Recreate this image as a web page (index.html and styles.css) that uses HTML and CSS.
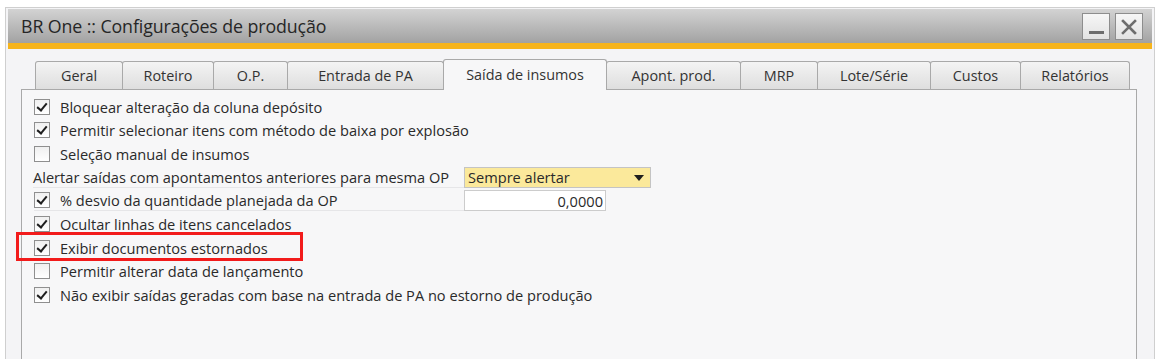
FILE: index.html
```html
<!DOCTYPE html>
<html lang="pt-BR">
<head>
    <meta charset="UTF-8">
    <title>BR One :: Configurações de produção</title>
    <link rel="stylesheet" href="styles.css">
</head>
<body>
    <!-- Janela -->
    <div class="window">
        <div class="title-bar">
            <span class="title">BR One :: Configurações de produção</span>
            <div class="win-buttons">
                <div class="win-btn btn-min"><span></span></div>
                <div class="win-btn btn-close">
                    <svg width="16" height="16" viewBox="0 0 16 16">
                        <path d="M2 2 L14 14 M14 2 L2 14" stroke="#6d6d6d" stroke-width="2.6" stroke-linecap="square"/>
                    </svg>
                </div>
            </div>
        </div>
        <div class="accent"></div>

        <div class="window-body">
            <!-- Abas -->
            <div class="tabs">
                <div class="tab t-geral">Geral</div>
                <div class="tab t-roteiro">Roteiro</div>
                <div class="tab t-op">O.P.</div>
                <div class="tab t-entrada">Entrada de PA</div>
                <div class="tab t-saida active">Saída de insumos</div>
                <div class="tab t-apont">Apont. prod.</div>
                <div class="tab t-mrp">MRP</div>
                <div class="tab t-lote">Lote/Série</div>
                <div class="tab t-custos">Custos</div>
                <div class="tab t-relat">Relatórios</div>
            </div>

            <!-- Conteúdo da aba -->
            <div class="panel">
                <div class="row"><span class="check on"></span>Bloquear alteração da coluna depósito</div>
                <div class="row"><span class="check on"></span>Permitir selecionar itens com método de baixa por explosão</div>
                <div class="row"><span class="check"></span>Seleção manual de insumos</div>
                <div class="row field-row">
                    <span class="field-label plain">Alertar saídas com apontamentos anteriores para mesma OP</span>
                    <div class="select">Sempre alertar<span class="arrow"></span></div>
                </div>
                <div class="row field-row">
                    <span class="field-label"><span class="check on"></span>% desvio da quantidade planejada da OP</span>
                    <div class="input">0,0000</div>
                </div>
                <div class="row"><span class="check on"></span>Ocultar linhas de itens cancelados</div>
                <div class="row highlighted"><span class="check on"></span>Exibir documentos estornados</div>
                <div class="row"><span class="check"></span>Permitir alterar data de lançamento</div>
                <div class="row"><span class="check on"></span>Não exibir saídas geradas com base na entrada de PA no estorno de produção</div>
            </div>
        </div>
    </div>
</body>
</html>
```

FILE: styles.css
```css
*, *::before, *::after {
    margin: 0;
    padding: 0;
    box-sizing: border-box;
}

html, body {
    background: #ffffff;
    font-family: 'Open Sans', 'Noto Sans', sans-serif;
    color: #2b2b2b;
    width: 1160px;
    height: 359px;
    overflow: hidden;
}

body {
    padding: 7px 0 0 5px;
}

/* Janela */
.window {
    width: 1150px;
    height: 352px;
    border: 1px solid #cfcfcf;
    border-bottom: none;
    padding: 1px 2px 0 2px;
    background: #f4f4f6;
    overflow: hidden;
}

.title-bar {
    height: 34px;
    background: linear-gradient(#d3d3d3, #a2a2a2);
    display: flex;
    align-items: center;
    justify-content: space-between;
    padding: 0 9px 0 13px;
}

.title {
    font-size: 17.8px;
    color: #262626;
    letter-spacing: -0.1px;
}

.win-buttons {
    display: flex;
    gap: 5px;
    margin-top: 1px;
}

.win-btn {
    width: 28px;
    height: 27px;
    background: linear-gradient(#f6f6f6, #e2e2e2);
    border: 1px solid #8d8d8d;
    display: flex;
    align-items: center;
    justify-content: center;
}

.btn-min span {
    display: block;
    width: 15px;
    height: 3px;
    background: #6d6d6d;
    margin-top: 12px;
}

.accent {
    height: 6px;
    background: #f6b41c;
}

.window-body {
    padding: 10px 15px 0 13px;
}

/* Abas */
.tabs {
    display: flex;
    align-items: flex-end;
    height: 30px;
    padding-left: 14px;
}

.tab {
    height: 28px;
    border: 1px solid #a9a9a9;
    border-bottom: none;
    border-radius: 3px 3px 0 0;
    background: linear-gradient(#f4f4f4, #dedede);
    font-size: 14.4px;
    color: #333;
    display: flex;
    align-items: center;
    justify-content: center;
    margin-right: -1px;
}

.tab.active {
    height: 31px;
    background: #f7f7f8;
    margin-bottom: -1px;
    position: relative;
    z-index: 2;
    padding-bottom: 2px;
}

.t-geral { width: 88px; }
.t-roteiro { width: 92px; }
.t-op { width: 75px; }
.t-entrada { width: 157px; }
.t-saida { width: 164px; }
.t-apont { width: 135px; }
.t-mrp { width: 78px; }
.t-lote { width: 114px; }
.t-custos { width: 91px; }
.t-relat { width: 110px; }

.panel {
    height: 290px;
    background: #f7f7f8;
    border: 1px solid #a9a9a9;
    border-bottom: none;
    padding: 5px 0 0 12px;
}

/* Linhas */
.row {
    height: 23.5px;
    display: flex;
    align-items: center;
    font-size: 14.6px;
    color: #2a2a2a;
}

.check {
    width: 16px;
    height: 16px;
    border: 1px solid #8f8f8f;
    background: linear-gradient(#f0f0f0, #ffffff);
    margin-right: 10px;
    flex-shrink: 0;
    position: relative;
}

.check.on::after {
    content: "";
    position: absolute;
    left: 4px;
    top: 1px;
    width: 6px;
    height: 10px;
    border-right: 2.4px solid #1e1e1e;
    border-bottom: 2.4px solid #1e1e1e;
    transform: rotate(40deg);
}

.field-label {
    width: 430px;
    display: flex;
    align-items: center;
    height: 21px;
    border-bottom: 1px solid #e6e6e8;
    white-space: nowrap;
}

.field-label.plain {
    margin-left: -1px;
    width: 431px;
}

.select {
    width: 187px;
    height: 21px;
    background: #fbe99b;
    border: 1px solid #c4c4c4;
    font-size: 14.6px;
    display: flex;
    align-items: center;
    padding-left: 3px;
    position: relative;
}

.arrow {
    position: absolute;
    right: 6px;
    top: 7px;
    border-left: 5px solid transparent;
    border-right: 5px solid transparent;
    border-top: 6px solid #1f1f1f;
}

.input {
    width: 142px;
    height: 21px;
    background: #ffffff;
    border: 1px solid #cccccc;
    font-size: 14.6px;
    display: flex;
    align-items: center;
    justify-content: flex-end;
    padding-right: 2px;
}

/* Destaque vermelho */
.highlighted {
    position: relative;
}

.highlighted::before {
    content: "";
    position: absolute;
    left: -18px;
    top: -4px;
    width: 287px;
    height: 29px;
    border: 3px solid #f21b1b;
}
```
